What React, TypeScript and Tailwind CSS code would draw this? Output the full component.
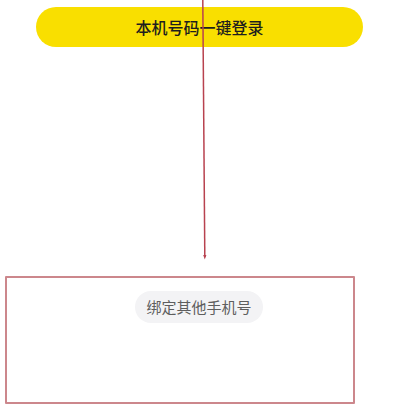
import React from "react";

export default function App() {
  return (
    <div className="relative w-[400px] h-[413px] bg-white overflow-hidden" style={{ fontFamily: '"Noto Sans CJK SC", "Noto Sans", sans-serif' }}>
      <div className="pt-[7px] pl-[36px]">
        <div className="w-[327px] h-[40px] rounded-full bg-[#f9df00] flex items-center justify-center text-[16px] font-medium text-[#1e1e1e]">
          本机号码一键登录
        </div>
      </div>
      <div className="mt-[229px] ml-[5px] w-[350px] h-[128px] border-2 border-[#cc878c] rounded-[1px]">
        <div className="mt-[13px] ml-[128px] w-[128px] h-[32px] rounded-full bg-[#f3f3f5] flex items-center justify-center text-[15px] text-[#5e5e5e]">
          绑定其他手机号
        </div>
      </div>
      <svg className="absolute left-0 top-0" width="400" height="413" viewBox="0 0 400 413">
        <line x1="202.8" y1="0" x2="204.8" y2="257" stroke="#b8424f" strokeWidth="1.5" />
        <path d="M203.2 255 L206.4 255 L204.8 259.5 Z" fill="#b8424f" />
      </svg>
    </div>
  );
}
